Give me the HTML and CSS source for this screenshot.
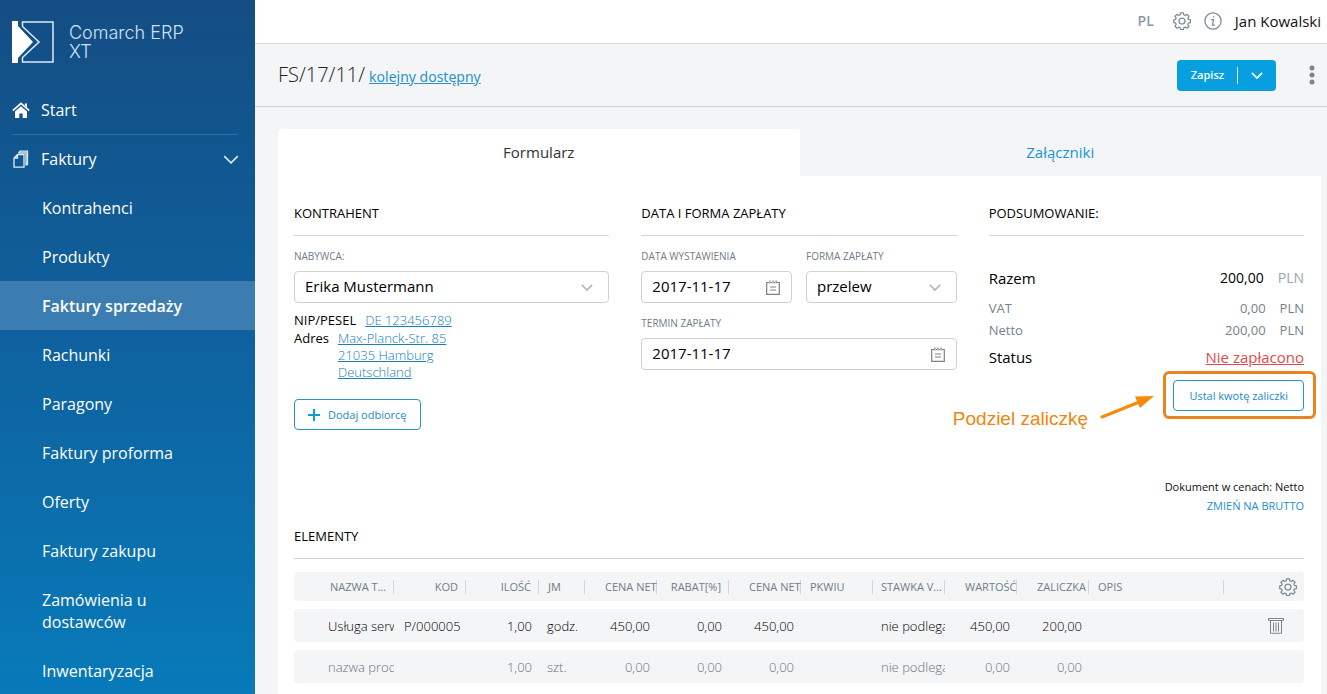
FILE: index.html
```html
<!DOCTYPE html>
<html lang="pl">
<head>
<meta charset="utf-8">
<title>Comarch ERP XT</title>
<link rel="stylesheet" href="styles.css">
</head>
<body>
<svg class="sprite" aria-hidden="true">
  <symbol id="gear" viewBox="0 0 20 20">
    <path d="M8.400 1h3.200l.5 2.300 1.500.6 2-1.300 2.200 2.200-1.300 2 .6 1.500 2.300.5v2.900l-2.300.6-.6 1.500 1.300 2-2.200 2.200-2-1.300-1.500.6-.5 2.200H8.400l-.5-2.200-1.500-.6-2 1.300-2.200-2.200 1.300-2-.6-1.500L.8 11.700V8.800l2.100-.5.6-1.500-1.300-2 2.200-2.200 2 1.300 1.500-.6z" stroke-linejoin="round"/>
    <circle cx="10" cy="10.100" r="3.300"/>
  </symbol>
  <symbol id="chevron" viewBox="0 0 14 8"><path d="M1 1l6 6 6-6"/></symbol>
  <symbol id="calendar" viewBox="0 0 14 15">
    <path d="M3 2.500H.7v11.800h12.600V2.500H11M5 2.500h1M8 2.500h1M3.900.5v3M7 .5v3M10.100.5v3M4 7h6M4 10h6"/>
  </symbol>
</svg>
<div class="app">
  <aside class="sidebar">
    <div class="brand">
      <svg class="brand-mark" viewBox="0 0 42 42" aria-hidden="true">
        <path d="M0 0h6v5l15 16L6 37v5H0z" fill="#fff"/>
        <path d="M10.500 1h30.500v40H10.500v-4.500L27 21 10.500 5.500z" fill="none" stroke="#dcecfa" stroke-width="1.500"/>
      </svg>
      <span class="brand-name">Comarch ERP<br>XT</span>
    </div>
    <nav class="menu">
      <a class="menu-main" href="#">
        <svg class="menu-icon" viewBox="0 0 18 18" aria-hidden="true">
          <path d="M9 5.200l6 5.300V17h-4.300v-4.500H7.300V17H3v-6.500z" fill="#fff"/>
          <path d="M.8 9.700L9 2.300l8.200 7.400" fill="none" stroke="#fff" stroke-width="1.600"/>
          <path d="M12.800 2.500h2.200v4l-2.200-2z" fill="#fff"/>
        </svg>
        <span>Start</span>
      </a>
      <hr class="menu-line">
      <a class="menu-main" href="#">
        <svg class="menu-icon line-icon" viewBox="0 0 18 18" aria-hidden="true">
          <path d="M5.500 4.500H12V17.200H2V8zM5.500 4.500V8H2M6.500 3L8 1.200h7.500v13.300H14M6.500 2.800H14V15.500"/>
        </svg>
        <span>Faktury</span>
        <svg class="menu-chevron line-icon"><use href="#chevron"/></svg>
      </a>
      <a class="menu-sub" href="#">Kontrahenci</a>
      <a class="menu-sub" href="#">Produkty</a>
      <a class="menu-sub active" href="#" aria-current="page">Faktury sprzedaży</a>
      <a class="menu-sub" href="#">Rachunki</a>
      <a class="menu-sub" href="#">Paragony</a>
      <a class="menu-sub" href="#">Faktury proforma</a>
      <a class="menu-sub" href="#">Oferty</a>
      <a class="menu-sub" href="#">Faktury zakupu</a>
      <a class="menu-sub" href="#">Zamówienia u dostawców</a>
      <a class="menu-sub" href="#">Inwentaryzacja</a>
    </nav>
  </aside>

  <div class="content">
    <header class="topbar">
      <button class="plain lang" type="button">PL</button>
      <button class="plain" type="button" aria-label="Ustawienia"><svg class="icon gray-icon"><use href="#gear"/></svg></button>
      <button class="plain" type="button" aria-label="Informacje">
        <svg class="icon gray-icon" viewBox="0 0 20 20">
          <circle cx="10" cy="10" r="9"/>
          <path d="M8 8.500h2.600L9.400 14.500h2.400M10.900 4.800v1.700"/>
        </svg>
      </button>
      <button class="plain user" type="button">Jan Kowalski</button>
    </header>

    <div class="titlebar">
      <h1 class="doc-number">FS/17/11/</h1>
      <a class="link next-number" href="#">kolejny dostępny</a>
      <div class="save">
        <button class="save-main" type="button">Zapisz</button>
        <button class="save-more" type="button" aria-label="Więcej opcji zapisu"><svg class="save-chevron"><use href="#chevron"/></svg></button>
      </div>
      <button class="plain kebab" type="button" aria-label="Menu">
        <svg viewBox="0 0 6 20" width="6" height="20"><circle cx="3" cy="3" r="2.500"/><circle cx="3" cy="10" r="2.500"/><circle cx="3" cy="17" r="2.500"/></svg>
      </button>
    </div>

    <main class="page">
      <div class="tabs" role="tablist">
        <button class="tab selected" type="button" role="tab" aria-selected="true">Formularz</button>
        <button class="tab" type="button" role="tab" aria-selected="false">Załączniki</button>
      </div>

      <div class="panel">
        <div class="columns">
          <section>
            <h2 class="section-title">KONTRAHENT</h2>
            <div class="field">
              <label for="buyer">NABYWCA:</label>
              <div class="control">
                <select id="buyer"><option>Erika Mustermann</option></select>
                <svg class="control-chevron"><use href="#chevron"/></svg>
              </div>
            </div>
            <div class="party">
              <div class="party-row"><span>NIP/PESEL</span><a class="link" href="#">DE 123456789</a></div>
              <div class="party-row"><span>Adres</span><a class="link" href="#">Max-Planck-Str. 85<br>21035 Hamburg<br>Deutschland</a></div>
            </div>
            <button class="outline add" type="button">
              <svg width="12" height="12" viewBox="0 0 12 12" aria-hidden="true"><path d="M6 0v12M0 6h12"/></svg>
              Dodaj odbiorcę
            </button>
          </section>

          <section>
            <h2 class="section-title">DATA I FORMA ZAPŁATY</h2>
            <div class="field-pair">
              <div class="field">
                <label for="issued">DATA WYSTAWIENIA</label>
                <div class="control">
                  <input id="issued" type="text" value="2017-11-17">
                  <svg class="control-calendar"><use href="#calendar"/></svg>
                </div>
              </div>
              <div class="field">
                <label for="method">FORMA ZAPŁATY</label>
                <div class="control">
                  <select id="method"><option>przelew</option></select>
                  <svg class="control-chevron"><use href="#chevron"/></svg>
                </div>
              </div>
            </div>
            <div class="field">
              <label for="due">TERMIN ZAPŁATY</label>
              <div class="control">
                <input id="due" type="text" value="2017-11-17">
                <svg class="control-calendar"><use href="#calendar"/></svg>
              </div>
            </div>
          </section>

          <section>
            <h2 class="section-title">PODSUMOWANIE:</h2>
            <div class="summary">
              <div class="sum-row total"><span>Razem</span><span class="amount">200,00</span><span class="currency">PLN</span></div>
              <div class="sum-row"><span>VAT</span><span class="amount">0,00</span><span class="currency">PLN</span></div>
              <div class="sum-row"><span>Netto</span><span class="amount">200,00</span><span class="currency">PLN</span></div>
              <div class="sum-row status"><span>Status</span><a class="unpaid" href="#">Nie zapłacono</a></div>
              <div class="advance">
                <button class="outline" type="button">Ustal kwotę zaliczki</button>
                <div class="callout-frame"></div>
                <div class="callout">
                  <span>Podziel zaliczkę</span>
                  <svg width="54" height="28" viewBox="0 0 54 28" aria-hidden="true">
                    <path d="M2 24L38 9.500" stroke="#f58a0b" stroke-width="3" stroke-linecap="round"/>
                    <path d="M54 3L35 3.500 40 15z" fill="#f58a0b"/>
                  </svg>
                </div>
              </div>
            </div>
          </section>
        </div>

        <div class="pricing">
          <span>Dokument w cenach: Netto</span>
          <a href="#">ZMIEŃ NA BRUTTO</a>
        </div>

        <h2 class="section-title">ELEMENTY</h2>
        <table class="items">
          <colgroup>
            <col class="w-lead"><col class="w-col"><col class="w-col"><col class="w-count"><col class="w-unit">
            <col class="w-col"><col class="w-col"><col class="w-col"><col class="w-col"><col class="w-col">
            <col class="w-col"><col class="w-col"><col><col class="w-tools">
          </colgroup>
          <thead>
            <tr>
              <td></td>
              <th class="dots">NAZWA TOWARU</th>
              <th class="num">KOD</th>
              <th class="num">ILOŚĆ</th>
              <th>JM</th>
              <th class="wide">CENA NETTO</th>
              <th class="num">RABAT[%]</th>
              <th class="wide">CENA NETTO</th>
              <th>PKWIU</th>
              <th class="dots">STAWKA VAT</th>
              <th class="wide">WARTOŚĆ</th>
              <th class="wide">ZALICZKA</th>
              <th>OPIS</th>
              <td class="tools"><button class="plain" type="button" aria-label="Kolumny"><svg class="icon gray-icon"><use href="#gear"/></svg></button></td>
            </tr>
          </thead>
          <tbody>
            <tr>
              <td></td><td class="name">Usługa serwisowa</td><td class="code">P/000005</td><td class="num">1,00</td><td>godz.</td>
              <td class="num">450,00</td><td class="num">0,00</td><td class="num">450,00</td><td></td>
              <td>nie podlega</td><td class="num">450,00</td><td class="num">200,00</td><td></td>
              <td class="remove">
                <button class="plain" type="button" aria-label="Usuń">
                  <svg width="16" height="17" viewBox="0 0 16 17"><path d="M.5 1.500h15v2H.5zM2.500 3.500v12.800h11V3.500M5.500 5.500v9M8 5.500v9M10.500 5.500v9"/></svg>
                </button>
              </td>
            </tr>
            <tr class="blank">
              <td></td><td class="name">nazwa produktu</td><td></td><td class="num">1,00</td><td>szt.</td>
              <td class="num">0,00</td><td class="num">0,00</td><td class="num">0,00</td><td></td>
              <td>nie podlega</td><td class="num">0,00</td><td class="num">0,00</td><td></td><td></td>
            </tr>
          </tbody>
        </table>
      </div>
    </main>
  </div>
</div>
</body>
</html>
```
FILE: styles.css
```css
* { box-sizing: border-box; }

body {
  margin: 0;
  font-family: "Open Sans", "Noto Sans", sans-serif;
  font-size: 13px;
  color: #111;
  background: #f4f5f7;
}

button, input, select { font: inherit; color: inherit; }
button { cursor: pointer; }
a { text-decoration: none; }

.sprite { display: none; }

.app {
  display: flex;
  height: 100vh;
  overflow: hidden;
}

/* Sidebar */
.sidebar {
  flex: 0 0 255px;
  overflow-y: auto;
  scrollbar-width: none;
  color: #fff;
  background: linear-gradient(#144d83, #0e629f 50%, #087ab9);
}

.brand {
  display: flex;
  gap: 15px;
  padding: 21px 12px 23px;
}

.brand-mark { width: 42px; height: 42px; }

.brand-name {
  padding-top: 2px;
  font-family: Inter, sans-serif;
  font-size: 18px;
  font-weight: 300;
  line-height: 19px;
  color: #cfe3f7;
}

.menu { font-size: 16px; }
.menu a { color: #fff; }

.menu-main {
  display: flex;
  align-items: center;
  gap: 11px;
  height: 48px;
  padding: 0 16px 0 12px;
}

.menu-icon { width: 18px; height: 18px; }
.line-icon { fill: none; stroke: #dcecfa; stroke-width: 1.3; }
.menu-chevron { width: 16px; height: 9px; margin-left: auto; }

.menu-line {
  height: 1px;
  margin: 0 17px 0 12px;
  border: 0;
  background: #2f6ea4;
}

.menu-sub {
  display: block;
  padding: 14px 60px 13px 42px;
  line-height: 22px;
}

.menu-sub.active {
  font-weight: 600;
  background: #3b7db0;
}

/* Top bars */
.content {
  display: flex;
  flex: 1;
  flex-direction: column;
  min-width: 0;
}

.plain {
  display: flex;
  align-items: center;
  padding: 0;
  border: 0;
  background: none;
}

.icon { width: 18px; height: 18px; }
.gray-icon { fill: none; stroke: #7d8b95; stroke-width: 1.4; }

.topbar {
  display: flex;
  align-items: center;
  justify-content: flex-end;
  gap: 13px;
  height: 44px;
  padding: 0 6px 2px 0;
  font-size: 15px;
  background: #fff;
  border-bottom: 1px solid #d3d6da;
}

.lang { margin-right: 6px; font-size: 14px; font-weight: 600; color: #8b98a2; }

.titlebar {
  display: flex;
  align-items: center;
  height: 63px;
  padding: 0 12px 0 23px;
  border-bottom: 1px solid #cdd1d5;
}

.doc-number {
  margin: 0 4px 0 0;
  font-size: 20px;
  font-weight: 300;
  line-height: 28px;
  color: #222;
}

.link { color: #2b93cc; text-decoration: underline; }
.next-number { padding-top: 2px; font-family: "Noto Sans", sans-serif; font-size: 14px; }

.save {
  display: flex;
  align-items: center;
  height: 31px;
  margin: 0 33px 0 auto;
  color: #fff;
  background: #079fe0;
  border-radius: 4px;
}

.save button { border: 0; background: none; }
.save-main { padding: 0 13px 2px 14px; font-size: 11px; font-weight: 600; }

.save .save-more {
  display: flex;
  align-items: center;
  height: 17px;
  padding: 0 13px;
  border-left: 1px solid #d9f1fb;
}

.save-chevron { width: 12px; height: 7px; fill: none; stroke: #fff; stroke-width: 2; }
.kebab { fill: #808589; }

/* Tabs and panel */
.page {
  display: flex;
  flex: 1;
  flex-direction: column;
  min-height: 0;
  padding: 22px 6px 0 23px;
}

.tabs { display: grid; grid-template-columns: 1fr 1fr; }

.tab {
  height: 47px;
  padding: 0 0 2px;
  border: 0;
  border-radius: 3px 3px 0 0;
  font-size: 15px;
  color: #1b94d3;
  background: none;
}

.tab.selected { color: #333; background: #fff; }

.panel {
  flex: 1;
  padding: 26px 17px 0 16px;
  background: #fff;
}

.columns {
  display: grid;
  grid-template-columns: repeat(3, minmax(0, 1fr));
  gap: 32px;
}

.section-title {
  margin: 0;
  padding: 2px 0 13px;
  font-size: 13px;
  font-weight: 500;
  line-height: 18px;
  color: #000;
  border-bottom: 1px solid #d0d3d3;
}

.field { padding-top: 12px; }

.field label {
  display: block;
  padding-bottom: 7px;
  font-size: 10px;
  font-weight: 500;
  line-height: 16px;
  color: #6f7d89;
}

.field-pair {
  display: grid;
  grid-template-columns: repeat(2, minmax(0, 1fr));
  gap: 14px;
}

.control {
  display: flex;
  align-items: center;
  height: 32px;
  padding-right: 11px;
  border: 1px solid #cfd2d2;
  border-radius: 4px;
}

.control input, .control select {
  flex: 1;
  min-width: 0;
  padding: 0 0 2px 10px;
  border: 0;
  outline: 0;
  appearance: none;
  background: none;
  font-size: 15px;
  color: #000;
}

.control-chevron { width: 12px; height: 7px; margin-right: 4px; fill: none; stroke: #b4b9bc; stroke-width: 2; }
.control-calendar { width: 14px; height: 15px; fill: none; stroke: #7c8184; stroke-width: 1.2; }

.party { padding: 9px 0 18px; line-height: 17px; color: #000; }
.party .link { font-weight: 300; color: #1480bd; }
.party-row { display: flex; gap: 9px; }
.party-row + .party-row { padding-top: 1px; }

.outline {
  height: 31px;
  padding: 0 15px;
  border: 1px solid #2695c2;
  border-radius: 4px;
  font-size: 11px;
  color: #2289c4;
  background: #fff;
}

.add { display: flex; align-items: center; gap: 8px; padding: 0 13px; }
.add svg { stroke: #0d9ddb; stroke-width: 2; }

.summary { padding-top: 31px; }

.sum-row {
  display: flex;
  justify-content: space-between;
  line-height: 22px;
  color: #74828e;
}

.amount { margin-left: auto; }
.currency { margin-left: 14px; }
.total, .status { font-size: 15px; color: #000; }
.total { padding-bottom: 8px; }
.total .amount, .total .currency { font-size: 14px; }
.total .currency { color: #9aa6af; }
.status { padding-top: 5px; }
.unpaid { color: #df4a4f; text-decoration: underline; }

.advance {
  position: relative;
  display: flex;
  justify-content: flex-end;
  padding-top: 12px;
}

.callout-frame {
  position: absolute;
  top: 3px;
  right: -12px;
  width: 153px;
  height: 48px;
  border: 3px solid #e8851c;
  border-radius: 6px;
  pointer-events: none;
}

.callout {
  position: absolute;
  top: 25px;
  right: 150px;
  display: flex;
  gap: 12px;
  font-family: "Liberation Sans", Arial, sans-serif;
  font-size: 19px;
  line-height: 52px;
  white-space: nowrap;
  color: #f0860f;
}

.pricing {
  display: flex;
  flex-direction: column;
  align-items: flex-end;
  padding: 47px 0 10px;
  font-size: 11px;
  line-height: 19px;
}

.pricing a { color: #1b8fcf; }

/* Items table */
.items {
  width: 100%;
  margin-top: 5px;
  table-layout: fixed;
  border-collapse: separate;
  border-spacing: 0 8px;
}

.w-lead { width: 28px; }
.w-col { width: 72px; }
.w-count { width: 73px; }
.w-unit { width: 46px; }
.w-tools { width: 80px; }

.items th, .items td {
  height: 33px;
  padding: 0 0 0 8px;
  overflow: hidden;
  white-space: nowrap;
  text-align: left;
  background: #f4f5f7;
}

.items thead th, .items thead td { height: 29px; }
.items tbody td { font-weight: 300; color: #000; }

.items th {
  padding: 0 4px 0 9px;
  font-size: 11px;
  font-weight: 500;
  color: #6f7d89;
  background: linear-gradient(#d3d7db, #d3d7db) right center / 1px 14px no-repeat #f4f5f7;
}

.items .dots { padding: 0 1px 0 8px; text-overflow: ellipsis; }
.items .name { padding-left: 6px; }
.items .code { padding-left: 10px; }
.items .num { padding-right: 7px; text-align: right; }
.items th.num { padding-right: 8px; }
.items .wide { padding: 0 0 0 20px; }
.items .tools button { margin: 0 7px 0 auto; }
.items .remove button { margin-left: 36px; fill: none; stroke: #808589; }
.items .blank td { color: #66747f; }
.items td:first-child { border-radius: 4px 0 0 4px; }
.items td:last-child { border-radius: 0 4px 4px 0; }
```
